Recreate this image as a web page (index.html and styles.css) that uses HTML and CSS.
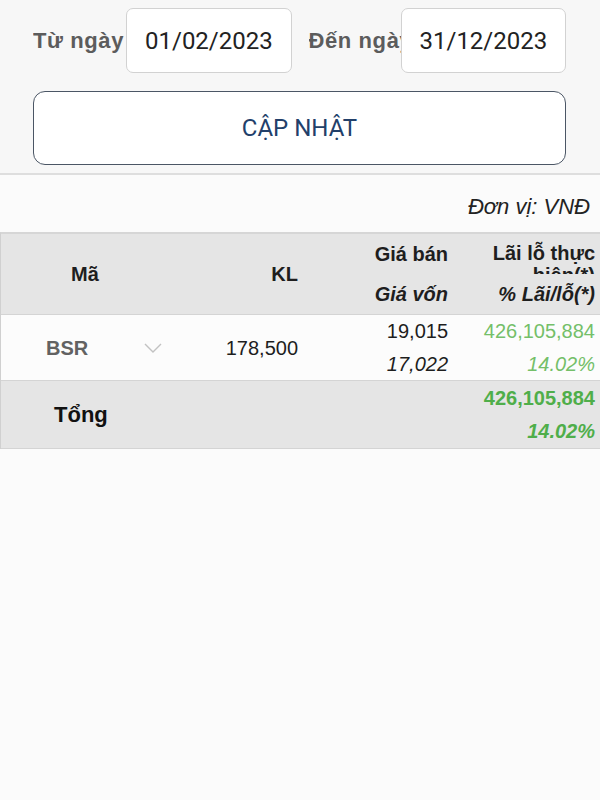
FILE: index.html
```html
<!DOCTYPE html>
<html lang="vi">
<head>
  <meta charset="UTF-8">
  <title>Lãi lỗ đã thực hiện</title>
  <link rel="stylesheet" href="styles.css">
</head>
<body>
  <div class="filter">
    <div class="filter-row">
      <span class="filter-label">Từ ngày</span>
      <div class="date-box">01/02/2023</div>
      <span class="filter-label filter-label-to">Đến ngày</span>
      <div class="date-box">31/12/2023</div>
    </div>
    <button class="update-btn">CẬP NHẬT</button>
  </div>

  <p class="unit">Đơn vị: VNĐ</p>

  <div class="pl-table">
    <div class="pl-row pl-head">
      <div class="cell cell-code">Mã</div>
      <div class="cell cell-qty">KL</div>
      <div class="cell cell-price">
        <span class="sub">Giá bán</span>
        <span class="sub sub-it">Giá vốn</span>
      </div>
      <div class="cell cell-pl">
        <span class="sub sub-clip">Lãi lỗ thực hiện(*)</span>
        <span class="sub sub-it">% Lãi/lỗ(*)</span>
      </div>
    </div>

    <div class="pl-row pl-item">
      <div class="cell cell-code">
        <span class="ticker">BSR</span>
        <svg class="chevron" width="18" height="10" viewBox="0 0 18 10">
          <polyline points="1,1 9,9 17,1" fill="none" stroke="#c2c2c2" stroke-width="1.4"/>
        </svg>
      </div>
      <div class="cell cell-qty">178,500</div>
      <div class="cell cell-price">
        <span class="sub">19,015</span>
        <span class="sub sub-it">17,022</span>
      </div>
      <div class="cell cell-pl up">
        <span class="sub">426,105,884</span>
        <span class="sub sub-it">14.02%</span>
      </div>
    </div>

    <div class="pl-row pl-total">
      <div class="cell cell-code total-label">Tổng</div>
      <div class="cell cell-qty"></div>
      <div class="cell cell-price"></div>
      <div class="cell cell-pl up-strong">
        <span class="sub">426,105,884</span>
        <span class="sub sub-it">14.02%</span>
      </div>
    </div>
  </div>
</body>
</html>
```

FILE: styles.css
```css
body {
  margin: 0;
  background: #fbfbfb;
  font-family: 'Liberation Sans', Arial, sans-serif;
  color: #1e1e1e;
}
.filter {
  background: #f7f7f7;
  padding: 8px 34px 8px 33px;
  border-bottom: 2px solid #dedede;
}
.filter-row {
  display: flex;
  align-items: center;
}
.filter-label {
  width: 93px;
  font-size: 22px;
  letter-spacing: 0.6px;
  font-weight: bold;
  color: #5c5c5c;
  white-space: nowrap;
  overflow: hidden;
}
.filter-label-to {
  width: 92px;
  margin-left: 17px;
}
.date-box {
  flex: 1;
  height: 63px;
  display: flex;
  align-items: center;
  padding-left: 18px;
  background: #fff;
  border: 1px solid #d2d2d2;
  border-radius: 7px;
  font-family: Roboto, 'Liberation Sans', sans-serif;
  font-size: 24px;
  color: #222;
}
.update-btn {
  display: block;
  width: 100%;
  height: 74px;
  margin-top: 18px;
  background: #fff;
  border: 1.5px solid #4b5665;
  border-radius: 12px;
  font-family: Roboto, 'Liberation Sans', sans-serif;
  font-size: 24px;
  color: #22406a;
}
.unit {
  margin: 0;
  padding: 19px 10px 0 0;
  height: 38px;
  text-align: right;
  font-size: 22px;
  font-style: italic;
  color: #222;
}
.pl-table {
  border-top: 2px solid #d6d6d6;
  border-left: 1px solid #d0d0d0;
}
.pl-row {
  display: grid;
  grid-template-columns: 169px 135px 150px 145px;
  border-bottom: 1px solid #d4d4d4;
}
.pl-head {
  height: 80px;
  background: #e5e5e5;
  font-weight: bold;
}
.pl-item {
  height: 65px;
  background: #fcfcfc;
}
.pl-total {
  height: 67px;
  background: #e5e5e5;
}
.cell {
  font-size: 20px;
  display: flex;
  flex-direction: column;
  justify-content: center;
}
.cell-code {
  padding-left: 70px;
}
.pl-item .cell-code {
  flex-direction: row;
  align-items: center;
  justify-content: flex-start;
  padding-left: 45px;
}
.ticker {
  width: 98px;
  font-weight: bold;
  color: #626262;
}
.total-label {
  padding-left: 53px;
  font-size: 22px;
  font-weight: bold;
  color: #111;
}
.cell-qty {
  align-items: flex-end;
  padding-right: 7px;
}
.cell-price {
  align-items: flex-end;
  padding-right: 7px;
}
.cell-pl {
  align-items: flex-end;
  padding-right: 5px;
}
.sub {
  display: block;
  height: 33px;
  line-height: 33px;
  text-align: right;
}
.pl-head .sub {
  height: 40px;
  line-height: 40px;
}
.pl-head .sub-clip {
  line-height: 22px;
  padding-top: 8px;
  height: 32px;
  overflow: hidden;
}
.sub-it {
  font-style: italic;
}
.up {
  color: #74bf69;
}
.up-strong {
  color: #4fae4a;
  font-weight: bold;
}
```
